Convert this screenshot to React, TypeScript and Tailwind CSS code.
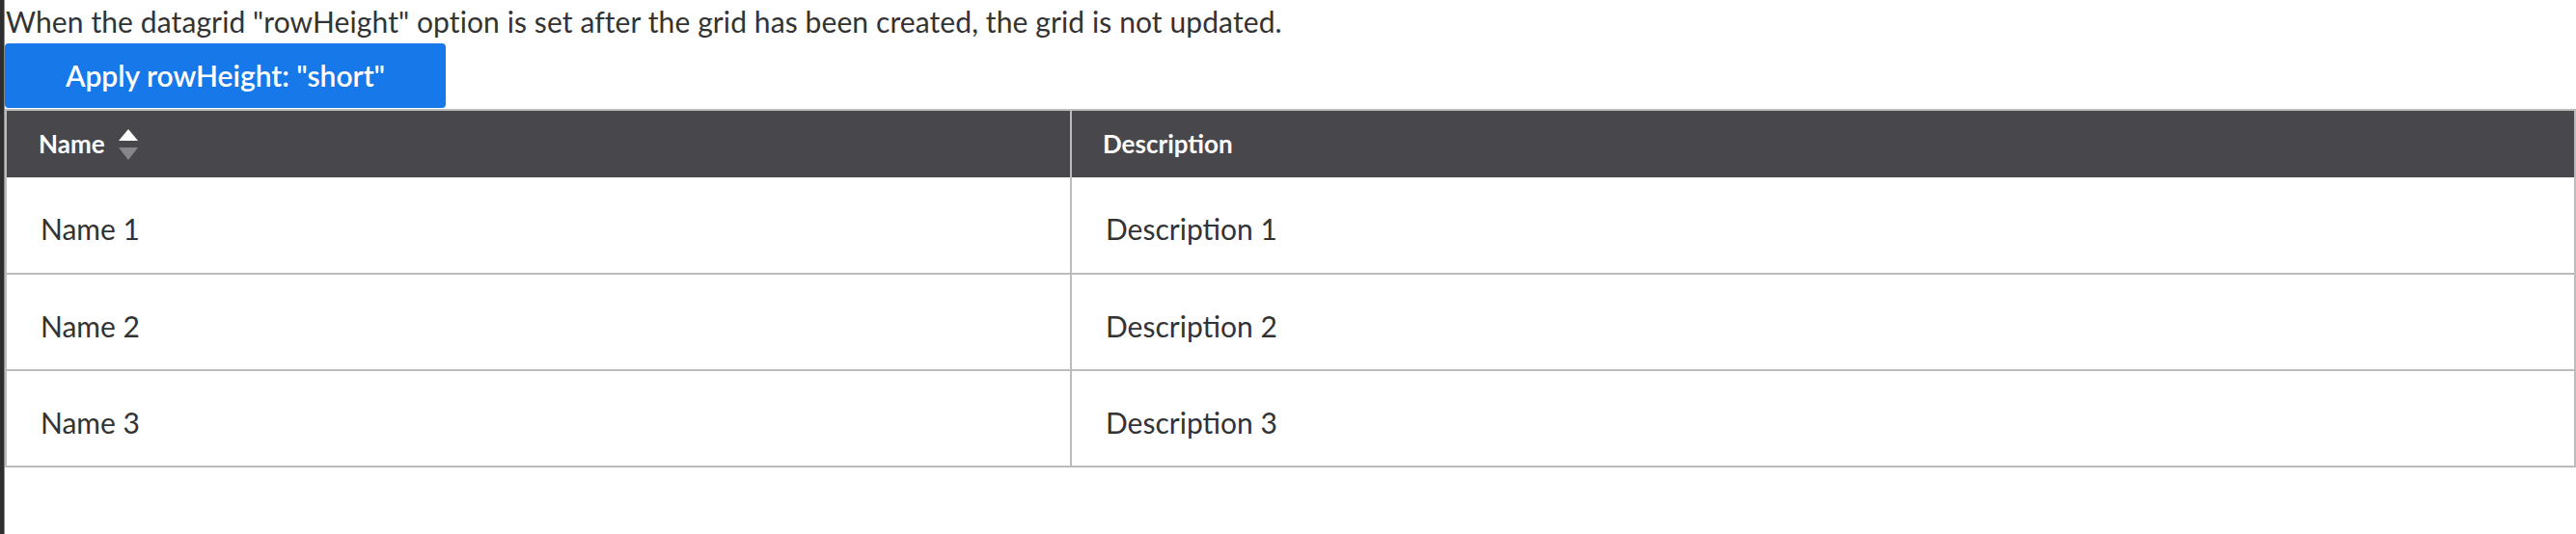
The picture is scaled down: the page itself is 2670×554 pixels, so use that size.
import React from "react";

const rows = [
  { name: "Name 1", description: "Description 1" },
  { name: "Name 2", description: "Description 2" },
  { name: "Name 3", description: "Description 3" },
];

function SortIcon() {
  return (
    <svg width="20" height="32" viewBox="0 0 20 32" className="ml-[14px] shrink-0">
      <polygon points="10,0 20,12 0,12" fill="#ffffff" />
      <polygon points="0,19 20,19 10,32" fill="#87868b" />
    </svg>
  );
}

export default function App() {
  return (
    <div className="flex h-[554px] w-full bg-white font-['Lato',_'Noto_Sans',_sans-serif] text-[#333333]">
      <div className="w-[5px] shrink-0 bg-[#2e2e31] border-r border-[#8a8a8a]" />
      <div className="flex min-w-0 flex-1 flex-col">
        <p className="h-[45px] whitespace-nowrap pl-[1px] text-[30px] leading-[45px] tracking-[0.1px]">
          When the datagrid "rowHeight" option is set after the grid has been created, the grid is not updated.
        </p>
        <button className="flex h-[67px] w-[457px] items-center justify-center rounded-[4px] bg-[#1778e9] text-[30px] font-semibold text-white">
          Apply rowHeight: "short"
        </button>
        <table className="mt-[1px] w-full border-collapse border-2 border-[#bcbcbc]">
          <thead>
            <tr className="h-[70px] bg-[#48474c] text-white">
              <th className="w-[1104px] border-r-2 border-[#bcbcbc] pl-[33px] text-left text-[26px] font-bold">
                <div className="flex items-center">
                  <span>Name</span>
                  <SortIcon />
                </div>
              </th>
              <th className="pl-[32px] text-left text-[26px] font-bold">Description</th>
            </tr>
          </thead>
          <tbody>
            {rows.map((r) => (
              <tr key={r.name} className="h-[100px] border-b-2 border-[#bcbcbc]">
                <td className="border-r-2 border-[#bcbcbc] pl-[35px] pt-[8px] text-[30px]">{r.name}</td>
                <td className="pl-[35px] pt-[8px] text-[30px]">{r.description}</td>
              </tr>
            ))}
          </tbody>
        </table>
      </div>
    </div>
  );
}
